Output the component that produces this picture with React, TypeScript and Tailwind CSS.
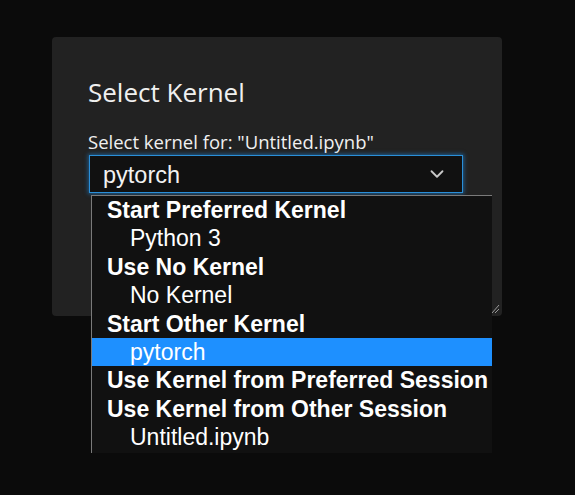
import { ChevronDown } from "lucide-react";

type Row = { label: string; header?: boolean; active?: boolean };

const rows: Row[] = [
  { label: "Start Preferred Kernel", header: true },
  { label: "Python 3" },
  { label: "Use No Kernel", header: true },
  { label: "No Kernel" },
  { label: "Start Other Kernel", header: true },
  { label: "pytorch", active: true },
  { label: "Use Kernel from Preferred Session", header: true },
  { label: "Use Kernel from Other Session", header: true },
  { label: "Untitled.ipynb" },
];

export default function App() {
  return (
    <div className="h-[495px] w-[575px] overflow-hidden bg-[#0b0b0b] pl-[52px] pt-[37px]">
      <div className="relative h-[279px] w-[450px] rounded-[4px] bg-[#222222] px-[36px] pt-[38px] font-['Open_Sans',sans-serif] text-[#f0f0f0]">
        <h1 className="text-[26px] leading-[34px]">Select Kernel</h1>
        <p className="mt-[22px] text-[18.5px] leading-[22px]">
          Select kernel for: "Untitled.ipynb"
        </p>
        <div className="relative ml-[1px] mt-[2px] w-[374px]">
          <div className="flex h-[38px] items-center justify-between border border-[#2a8fd8] bg-[#111111] pl-[13px] pr-[14px] font-['Liberation_Sans',Arial,sans-serif] text-[23.5px] text-[#f2f2f2] shadow-[0_0_4px_1px_rgba(30,130,210,0.6)]">
            <span className="pt-[3px]">pytorch</span>
            <ChevronDown size={22} strokeWidth={2} className="text-[#c8c8c8]" />
          </div>
          <ul className="absolute left-[2px] top-[40px] z-10 w-[401px] border-l border-t border-[#7a7a7a] bg-[#111111] pb-[1px] font-['Liberation_Sans',Arial,sans-serif] text-[23px] leading-[28.4px] text-white">
            {rows.map((r) =>
              r.header ? (
                <li key={r.label} className="pl-[15px] font-bold">
                  {r.label}
                </li>
              ) : (
                <li
                  key={r.label}
                  className={`pl-[38px] ${r.active ? "bg-[#1e90ff]" : ""}`}
                >
                  {r.label}
                </li>
              )
            )}
          </ul>
        </div>
        <svg
          className="absolute bottom-[2px] right-[2px]"
          width="9"
          height="13"
          viewBox="0 0 9 13"
        >
          <path d="M1 12 L8 4 M4 12 L8 8" stroke="#9a9a9a" strokeWidth="1" fill="none" />
        </svg>
      </div>
    </div>
  );
}
